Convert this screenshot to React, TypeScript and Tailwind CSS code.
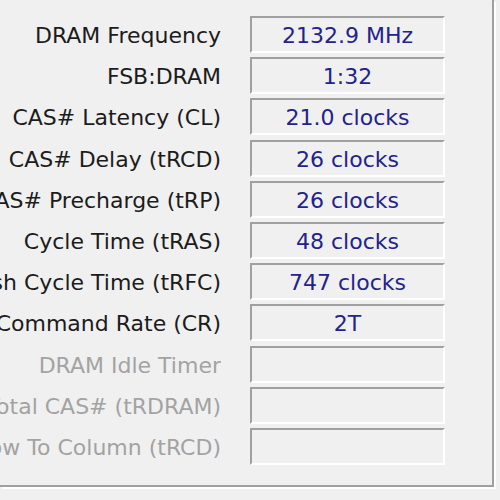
const rows = [
  { label: "DRAM Frequency", value: "2132.9 MHz" },
  { label: "FSB:DRAM", value: "1:32" },
  { label: "CAS# Latency (CL)", value: "21.0 clocks" },
  { label: "CAS# Delay (tRCD)", value: "26 clocks" },
  { label: "RAS# Precharge (tRP)", value: "26 clocks" },
  { label: "Cycle Time (tRAS)", value: "48 clocks" },
  { label: "Bank Refresh Cycle Time (tRFC)", value: "747 clocks" },
  { label: "Command Rate (CR)", value: "2T" },
  { label: "DRAM Idle Timer", value: "", disabled: true },
  { label: "Total CAS# (tRDRAM)", value: "", disabled: true },
  { label: "Row To Column (tRCD)", value: "", disabled: true },
]

const App = () => {
  return (
    <div
      className="w-[500px] h-[500px] bg-[#f0f0f0] overflow-hidden"
      style={{ fontFamily: '"DejaVu Sans", sans-serif' }}
    >
      <div className="w-[494px] h-[487px] border-r-2 border-b-2 border-[#a0a0a0] shadow-[2px_2px_0_#ffffff] pt-[16px]">
        <div className="flex flex-col gap-[4.2px]">
          {rows.map((row) => (
            <div className="flex items-center" key={row.label}>
              <div className="w-[221px] flex justify-end overflow-hidden">
                <span
                  className={
                    "shrink-0 whitespace-nowrap text-[22px] leading-none pt-[3px] " +
                    (row.disabled ? "text-[#a3a3a3]" : "text-[#1c1c1c]")
                  }
                >
                  {row.label}
                </span>
              </div>
              <div className="ml-[29px] w-[195px] h-[37px] border-t-2 border-l-2 border-t-[#a0a0a0] border-l-[#a0a0a0] border-b-2 border-r-2 border-b-white border-r-white flex items-center justify-center">
                <span className="text-[22px] leading-none pt-[3px] text-[#23238c] whitespace-nowrap">
                  {row.value}
                </span>
              </div>
            </div>
          ))}
        </div>
      </div>
    </div>
  )
}

export default App
